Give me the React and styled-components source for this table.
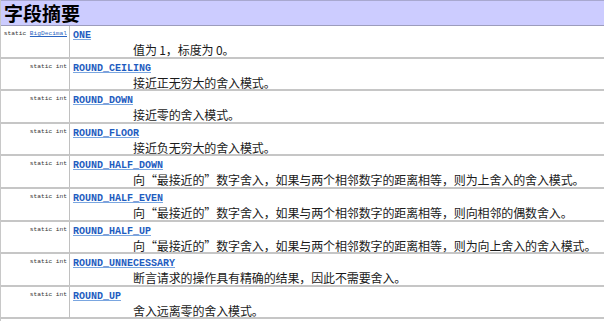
import React from 'react';
import styled, { createGlobalStyle } from 'styled-components';

const GlobalStyle = createGlobalStyle`
  html, body {
    margin: 0;
    padding: 0;
    background: #ffffff;
  }
  body {
    font-family: "Noto Sans CJK SC", "Liberation Sans", sans-serif;
  }
`;

const fields = [
  { type: 'static', linkType: 'BigDecimal', name: 'ONE', desc: '值为 1，标度为 0。' },
  { type: 'static int', name: 'ROUND_CEILING', desc: '接近正无穷大的舍入模式。' },
  { type: 'static int', name: 'ROUND_DOWN', desc: '接近零的舍入模式。' },
  { type: 'static int', name: 'ROUND_FLOOR', desc: '接近负无穷大的舍入模式。' },
  {
    type: 'static int',
    name: 'ROUND_HALF_DOWN',
    desc: '向“最接近的”数字舍入，如果与两个相邻数字的距离相等，则为上舍入的舍入模式。',
  },
  {
    type: 'static int',
    name: 'ROUND_HALF_EVEN',
    desc: '向“最接近的”数字舍入，如果与两个相邻数字的距离相等，则向相邻的偶数舍入。',
  },
  {
    type: 'static int',
    name: 'ROUND_HALF_UP',
    desc: '向“最接近的”数字舍入，如果与两个相邻数字的距离相等，则为向上舍入的舍入模式。',
  },
  { type: 'static int', name: 'ROUND_UNNECESSARY', desc: '断言请求的操作具有精确的结果，因此不需要舍入。' },
  { type: 'static int', name: 'ROUND_UP', desc: '舍入远离零的舍入模式。' },
];

const App = () => {
  return (
    <>
      <GlobalStyle />
      <Summary>
        <Header>字段摘要</Header>
        {fields.map((f) => (
          <Row key={f.name}>
            <TypeCell>
              <TypeText>
                {f.type}
                {f.linkType && (
                  <>
                    {' '}
                    <TypeLink>{f.linkType}</TypeLink>
                  </>
                )}
              </TypeText>
            </TypeCell>
            <FieldCell>
              <FieldName>{f.name}</FieldName>
              <Description>{f.desc}</Description>
            </FieldCell>
          </Row>
        ))}
      </Summary>
    </>
  );
};

const Summary = styled.div`
  width: 604px;
  height: 321px;
  overflow: hidden;
  display: grid;
  grid-template-rows: 26px;
  grid-auto-rows: 32.6px;
  border-left: 1px solid #c8c8c8;
  box-sizing: border-box;
`;

const Header = styled.div`
  background: #ccccff;
  border-top: 1px solid #a8a8d0;
  border-bottom: 1px solid #9c9cbc;
  box-sizing: border-box;
  padding-left: 3px;
  font-size: 19px;
  font-weight: bold;
  line-height: 23px;
  color: #000;
  font-family: "Noto Sans CJK SC", sans-serif;
`;

const Row = styled.div`
  display: grid;
  grid-template-columns: 69px 1fr;
  border-bottom: 2px solid #c6c6c6;
  box-sizing: border-box;
`;

const TypeCell = styled.div`
  border-right: 1px solid #c0c0c0;
  display: flex;
  justify-content: flex-end;
  align-items: flex-start;
  padding: 4px 2px 0 0;
`;

const TypeText = styled.span`
  font-family: "Liberation Mono", monospace;
  font-size: 6.2px;
  line-height: 8px;
  color: #333;
  white-space: nowrap;
`;

const TypeLink = styled.span`
  color: #2a64c0;
  text-decoration: underline;
`;

const FieldCell = styled.div`
  display: flex;
  flex-direction: column;
  padding: 3px 0 0 3px;
`;

const FieldName = styled.a`
  align-self: flex-start;
  font-family: "Liberation Mono", monospace;
  font-weight: bold;
  font-size: 10px;
  line-height: 13px;
  color: #1e5cc0;
  text-decoration: underline;
  text-decoration-color: #7aa6e0;
  cursor: pointer;
`;

const Description = styled.div`
  padding-left: 60px;
  font-size: 12px;
  line-height: 15px;
  letter-spacing: -0.12px;
  color: #1a1a1a;
  white-space: nowrap;
`;

export default App;
